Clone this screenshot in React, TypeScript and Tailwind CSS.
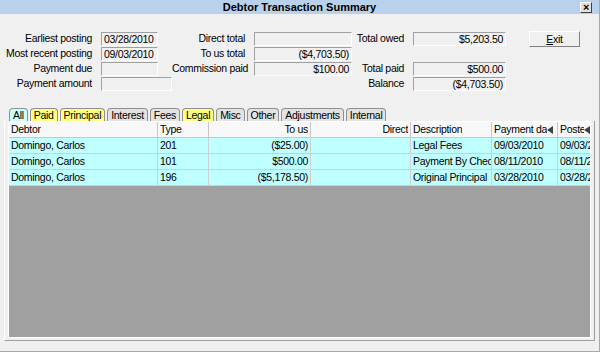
const font = { fontFamily: '"Liberation Sans", Arial, sans-serif' }

function Field({ value = '', w, right = false }: { value?: string; w: string; right?: boolean }) {
  return (
    <div
      className={`h-[14px] ${w} whitespace-nowrap border border-t-[#a0a0a0] border-l-[#a0a0a0] border-b-white border-r-white bg-[#f0f0f0] px-[2px] text-[10.5px] leading-[12px] tracking-[-0.3px] text-black ${right ? 'text-right' : ''}`}
    >
      {value}
    </div>
  )
}

function Row({ label, lw, children }: { label: string; lw: string; children: React.ReactNode }) {
  return (
    <div className="flex h-[15px] items-center gap-[9px]">
      <span className={`${lw} whitespace-nowrap text-right`}>{label}</span>
      {children}
    </div>
  )
}

const tabs = [
  { label: 'All', bg: 'bg-[#c8ffff]' },
  { label: 'Paid', bg: 'bg-[#ffff80]' },
  { label: 'Principal', bg: 'bg-[#ffff80]' },
  { label: 'Interest', bg: 'bg-[#e3e3e3]' },
  { label: 'Fees', bg: 'bg-[#e3e3e3]' },
  { label: 'Legal', bg: 'bg-[#ffff80]' },
  { label: 'Misc', bg: 'bg-[#e3e3e3]' },
  { label: 'Other', bg: 'bg-[#e3e3e3]' },
  { label: 'Adjustments', bg: 'bg-[#e3e3e3]' },
  { label: 'Internal', bg: 'bg-[#e3e3e3]' },
]

const rows = [
  ['Domingo, Carlos', '201', '($25.00)', '', 'Legal Fees', '09/03/2010', '09/03/2010'],
  ['Domingo, Carlos', '101', '$500.00', '', 'Payment By Check', '08/11/2010', '08/11/2010'],
  ['Domingo, Carlos', '196', '($5,178.50)', '', 'Original Principal', '03/28/2010', '03/28/2010'],
]

const cols = [
  { w: 'w-[149px]', right: false },
  { w: 'w-[51px]', right: false },
  { w: 'w-[102px]', right: true },
  { w: 'w-[100px]', right: true },
  { w: 'w-[81px]', right: false },
  { w: 'w-[66px]', right: false },
  { w: 'w-[36px]', right: false },
]

function SortArrow() {
  return (
    <svg width="7" height="8" viewBox="0 0 7 8" className="shrink-0">
      <path d="M6 0 L0 4 L6 8 Z" fill="#404040" />
    </svg>
  )
}

export default function App() {
  return (
    <div className="h-[352px] w-[600px] overflow-hidden bg-[#f0f0f0] text-black" style={font}>
      <div className="flex h-full flex-col border-b border-r border-[#a8a8a8] text-[10.5px] tracking-[-0.3px]">
        {/* title bar */}
        <div className="relative flex h-[14px] items-center justify-center bg-[#b9d1ea]">
          <span className="text-[11px] font-bold leading-none tracking-normal">Debtor Transaction Summary</span>
          <div className="absolute right-[7px] top-[2px] flex h-[11px] w-[12px] items-center justify-center border border-t-white border-l-white border-b-[#404040] border-r-[#404040] bg-[#e0e0e0] text-[11px] font-bold leading-none">
            ×
          </div>
        </div>

        {/* summary fields */}
        <div className="flex pt-[17px] leading-[15px]">
          <div className="flex w-[172px] flex-col">
            <Row label="Earliest posting" lw="w-[92px]">
              <Field w="w-[57px]" value="03/28/2010" />
            </Row>
            <Row label="Most recent posting" lw="w-[92px]">
              <Field w="w-[57px]" value="09/03/2010" />
            </Row>
            <Row label="Payment due" lw="w-[92px]">
              <Field w="w-[57px]" />
            </Row>
            <Row label="Payment amount" lw="w-[92px]">
              <Field w="w-[71px]" />
            </Row>
          </div>

          <div className="flex w-[180px] flex-col">
            <Row label="Direct total" lw="w-[73px]">
              <Field w="w-[98px]" right />
            </Row>
            <Row label="To us total" lw="w-[73px]">
              <Field w="w-[98px]" right value="($4,703.50)" />
            </Row>
            <Row label="Commission paid" lw="w-[73px]">
              <Field w="w-[98px]" right value="$100.00" />
            </Row>
          </div>

          <div className="flex w-[154px] flex-col">
            <Row label="Total owed" lw="w-[52px]">
              <Field w="w-[93px]" right value="$5,203.50" />
            </Row>
            <div className="h-[15px]" />
            <Row label="Total paid" lw="w-[52px]">
              <Field w="w-[93px]" right value="$500.00" />
            </Row>
            <Row label="Balance" lw="w-[52px]">
              <Field w="w-[93px]" right value="($4,703.50)" />
            </Row>
          </div>

          <div className="ml-[23px] flex h-[16px] w-[51px] items-center justify-center border border-t-white border-l-white border-b-[#808080] border-r-[#808080] bg-[#f0f0f0]">
            <span>
              <span className="underline">E</span>xit
            </span>
          </div>
        </div>

        {/* tabs */}
        <div className="mt-[16px] flex h-[14px] items-end pl-[9px] leading-[12px]">
          {tabs.map((t) => (
            <div
              key={t.label}
              className={`mr-[2px] h-[13px] whitespace-nowrap rounded-t-[4px] border border-b-0 border-[#909090] px-[3px] ${t.bg}`}
            >
              {t.label}
            </div>
          ))}
        </div>

        {/* tab page */}
        <div className="mx-[4px] flex-1 border-t-0 border-b border-l border-r border-l-white border-b-[#a0a0a0] border-r-[#a0a0a0] px-[3px] pb-[2px]">
          <div className="flex h-full flex-col overflow-hidden border border-white bg-[#a0a0a0]">
            <div className="flex h-[16px] bg-[#f8f8f8] leading-[15px]">
              {['Debtor', 'Type', 'To us', 'Direct', 'Description', 'Payment da', 'Poste'].map((h, i) => (
                <div
                  key={h}
                  className={`flex shrink-0 items-center overflow-hidden whitespace-nowrap border-r border-b border-[#c8c8c8] px-[2px] ${cols[i].w} ${cols[i].right ? 'justify-end' : ''}`}
                >
                  <span className="overflow-hidden">{h}</span>
                  {i >= 5 && <SortArrow />}
                </div>
              ))}
            </div>
            {rows.map((r, ri) => (
              <div key={ri} className="flex h-[16px] bg-[#c0ffff] leading-[15px]">
                {r.map((c, i) => (
                  <div
                    key={i}
                    className={`shrink-0 overflow-hidden whitespace-nowrap border-r border-b border-[#d0d0d0] px-[2px] ${cols[i].w} ${cols[i].right ? 'text-right' : ''}`}
                  >
                    {c}
                  </div>
                ))}
              </div>
            ))}
          </div>
        </div>
        <div className="h-[10px]" />
      </div>
    </div>
  )
}
